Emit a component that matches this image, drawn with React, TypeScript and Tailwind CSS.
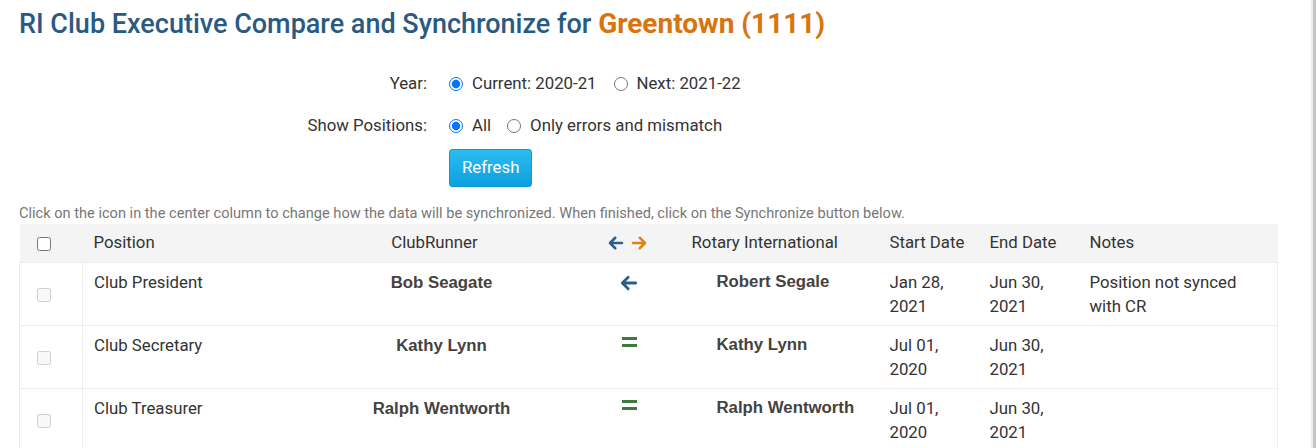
import React from "react";

const ArrowLeftIcon = ({ size = 18, color = "#2a5f8a" }: { size?: number; color?: string }) => (
  <svg width={size} height={size} viewBox="0 0 24 24" fill="none" stroke={color} strokeWidth={3.4} strokeLinecap="round" strokeLinejoin="round">
    <path d="M20 12H5" />
    <path d="M11 5l-7 7 7 7" />
  </svg>
);

const ArrowRightIcon = ({ size = 18, color = "#e0830f" }: { size?: number; color?: string }) => (
  <svg width={size} height={size} viewBox="0 0 24 24" fill="none" stroke={color} strokeWidth={3.4} strokeLinecap="round" strokeLinejoin="round">
    <path d="M4 12h15" />
    <path d="M13 5l7 7-7 7" />
  </svg>
);

const EqualsIcon = () => (
  <div className="flex flex-col gap-[4px] w-[15px]">
    <div className="h-[3px] bg-[#3d7a3d]" />
    <div className="h-[3px] bg-[#3d7a3d]" />
  </div>
);

type Row = {
  position: string;
  cr: string;
  ri: string;
  sync: "left" | "equal";
  start: [string, string];
  end: [string, string];
  notes: string;
};

const rows: Row[] = [
  { position: "Club President", cr: "Bob Seagate", ri: "Robert Segale", sync: "left", start: ["Jan 28,", "2021"], end: ["Jun 30,", "2021"], notes: "Position not synced with CR" },
  { position: "Club Secretary", cr: "Kathy Lynn", ri: "Kathy Lynn", sync: "equal", start: ["Jul 01,", "2020"], end: ["Jun 30,", "2021"], notes: "" },
  { position: "Club Treasurer", cr: "Ralph Wentworth", ri: "Ralph Wentworth", sync: "equal", start: ["Jul 01,", "2020"], end: ["Jun 30,", "2021"], notes: "" },
];

export default function App() {
  return (
    <div className="flex w-[1316px] h-[448px] overflow-hidden bg-white text-[#333] font-['Roboto','Liberation_Sans',sans-serif]">
      <div className="flex-1 pl-[19px]">
        <h1 className="pt-[8px] text-[27px] leading-[32px] font-medium text-[#2a5a82] whitespace-nowrap">
          RI Club Executive Compare and Synchronize for{" "}
          <span className="font-bold text-[28px] text-[#d9730d]">Greentown (1111)</span>
        </h1>

        <div className="mt-[23px] grid grid-cols-[408px_auto] gap-x-[22px] text-[16.8px]">
          <div className="h-[42px] flex items-center justify-end">Year:</div>
          <div className="h-[42px] flex items-center">
            <input type="radio" name="year" defaultChecked className="m-0 w-[14px] h-[14px]" />
            <span className="ml-[9px]">Current: 2020-21</span>
            <input type="radio" name="year" className="m-0 ml-[17px] w-[14px] h-[14px]" />
            <span className="ml-[9px]">Next: 2021-22</span>
          </div>
          <div className="h-[42px] flex items-center justify-end">Show Positions:</div>
          <div className="h-[42px] flex items-center">
            <input type="radio" name="show" defaultChecked className="m-0 w-[14px] h-[14px]" />
            <span className="ml-[9px]">All</span>
            <input type="radio" name="show" className="m-0 ml-[16px] w-[14px] h-[14px]" />
            <span className="ml-[9px]">Only errors and mismatch</span>
          </div>
          <div />
          <div className="mt-[2px]">
            <button className="h-[38px] px-[12px] rounded-[3px] border border-[#0b9cd8] bg-gradient-to-b from-[#2bbcf2] to-[#08a0df] text-white text-[16.8px]">
              Refresh
            </button>
          </div>
        </div>

        <p className="mt-[16px] text-[14.6px] leading-[20px] text-[#777] whitespace-nowrap">
          Click on the icon in the center column to change how the data will be synchronized. When finished, click on the Synchronize button below.
        </p>

        <table className="mt-[1px] w-[1258px] table-fixed border-collapse text-[16.8px]">
          <colgroup>
            <col className="w-[63px]" />
            <col className="w-[208px]" />
            <col className="w-[288px]" />
            <col className="w-[101px]" />
            <col className="w-[198px]" />
            <col className="w-[100px]" />
            <col className="w-[100px]" />
            <col className="w-[200px]" />
          </colgroup>
          <thead>
            <tr className="bg-[#f4f4f4] h-[38px]">
              <th className="pl-[17px] text-left align-middle">
                <input type="checkbox" className="m-0 w-[14px] h-[14px] align-middle" />
              </th>
              <th className="pl-[11px] pr-[12px] text-left font-normal">Position</th>
              <th className="px-[12px] text-center font-normal">ClubRunner</th>
              <th className="px-[12px] font-normal">
                <div className="flex justify-center gap-[5px] pr-[3px]">
                  <ArrowLeftIcon size={18} />
                  <ArrowRightIcon size={18} />
                </div>
              </th>
              <th className="pl-[12px] pr-[6px] text-left font-normal">Rotary International</th>
              <th className="px-[12px] text-left font-normal">Start Date</th>
              <th className="px-[12px] text-left font-normal">End Date</th>
              <th className="px-[12px] text-left font-normal">Notes</th>
            </tr>
          </thead>
          <tbody>
            {rows.map((r) => (
              <tr key={r.position} className="border-t border-[#ececec] align-top leading-[24px]">
                <td className="pl-[17px] border-l border-r border-[#ececec] align-middle text-left">
                  <input type="checkbox" disabled className="m-0 w-[14px] h-[14px] align-middle" />
                </td>
                <td className="pl-[11px] pr-[12px] pt-[7px] pb-[7px]">{r.position}</td>
                <td className="pl-[26px] pr-[12px] pt-[8px] pb-[7px] text-center font-['Liberation_Sans',Arial,sans-serif] font-bold text-[16.8px] text-[#45423e]">
                  {r.cr}
                </td>
                <td className="px-[12px] pt-[10px] pb-[7px]">
                  <div className="flex justify-center">
                    {r.sync === "left" ? <ArrowLeftIcon size={20} /> : <div className="pt-[1px]"><EqualsIcon /></div>}
                  </div>
                </td>
                <td className="pl-[37px] pr-[6px] pt-[7px] pb-[7px] font-['Liberation_Sans',Arial,sans-serif] font-bold text-[16.8px] text-[#45423e] whitespace-nowrap">
                  {r.ri}
                </td>
                <td className="px-[12px] pt-[7px] pb-[7px]">
                  {r.start[0]}
                  <br />
                  {r.start[1]}
                </td>
                <td className="px-[12px] pt-[7px] pb-[7px]">
                  {r.end[0]}
                  <br />
                  {r.end[1]}
                </td>
                <td className="px-[12px] pt-[7px] pb-[7px] border-r border-[#ececec]">{r.notes}</td>
              </tr>
            ))}
          </tbody>
        </table>
      </div>
      <div className="w-[2px] bg-[#eeeeee]" />
      <div className="w-[3px] bg-[#c4c4c4]" />
    </div>
  );
}
